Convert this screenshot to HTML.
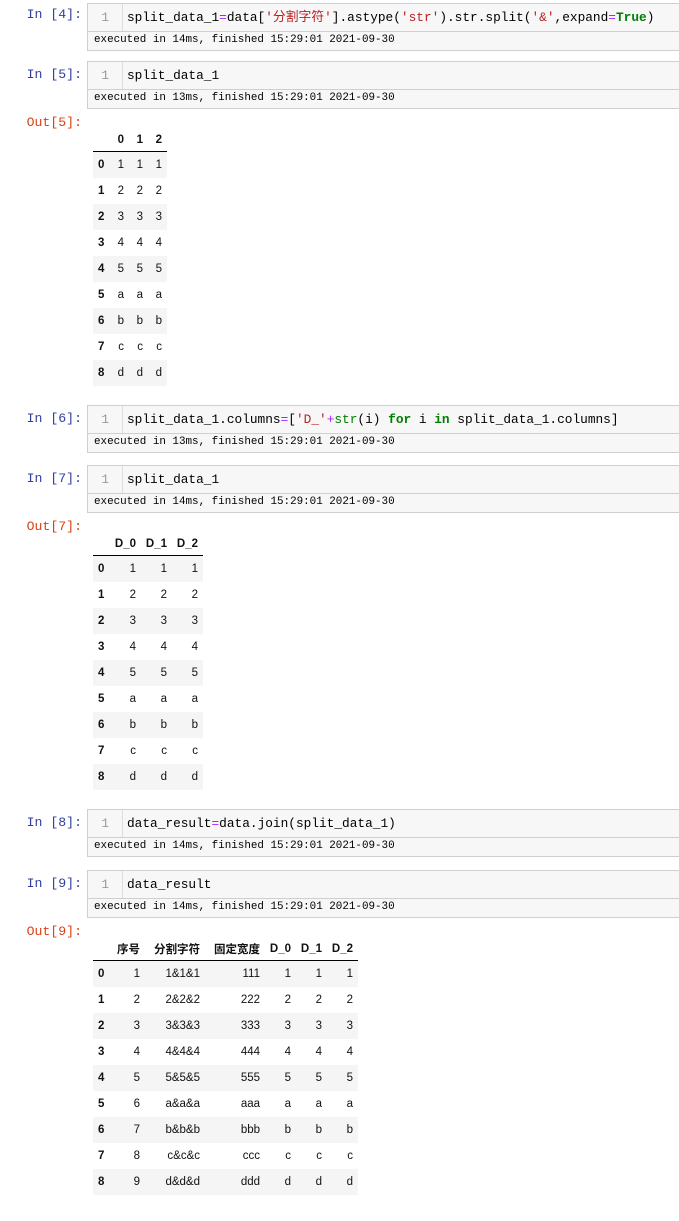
<!DOCTYPE html>
<html><head><meta charset="utf-8"><style>
body{margin:0;background:#fff;width:679px;height:1221px;position:relative;overflow:hidden;font-family:"Liberation Sans","Noto Sans CJK SC",sans-serif}
.lbl{position:absolute;left:0;width:82px;text-align:right;font-family:"Liberation Mono",monospace;font-size:13.2px;color:#303f9f}
.out{color:#d84315}
.box{position:absolute;left:87px;right:-2px;border:1px solid #cfcfcf;background:#f7f7f7}
.inp{height:27px;position:relative;font-family:"Liberation Mono","Noto Sans CJK SC",monospace;font-size:12.8px;line-height:27px;color:#000}
.ln{position:absolute;left:0;width:34px;height:27px;border-right:1px solid #ddd;text-align:right;color:#999}
.ln span{margin-right:13px}
.code{position:absolute;left:39px;white-space:pre}
.st{height:18px;border-top:1px solid #cfcfcf;font-family:"Liberation Mono",monospace;font-size:10.9px;line-height:17px;padding-left:6px;color:#000;background:#f7f7f7}
.s{color:#ba2121}.k{color:#008000;font-weight:bold}.o{color:#aa22ff}
table{position:absolute;left:93px;border-collapse:collapse;font-size:11.5px;color:#111}
th{font-weight:bold;height:23px;border-bottom:1px solid #000;text-align:right;padding:0 5px 0 0}
td{height:26px;text-align:right;padding:0 5px 0 0}
td:first-child,th:first-child{text-align:left;padding-left:5px;font-weight:bold}
tbody tr:nth-child(odd){background:#f5f5f5}
</style></head><body>

<div class="lbl" style="top:7px">In [4]:</div>
<div class="box" style="top:3px"><div class="inp"><div class="ln"><span>1</span></div><div class="code">split_data_1<span class="o">=</span>data[<span class="s">'分割字符'</span>].astype(<span class="s">'str'</span>).str.split(<span class="s">'&amp;'</span>,expand<span class="o">=</span><span class="k">True</span>)</div></div><div class="st">executed in 14ms, finished 15:29:01 2021-09-30</div></div>

<div class="lbl" style="top:67px">In [5]:</div>
<div class="box" style="top:61px"><div class="inp"><div class="ln"><span>1</span></div><div class="code">split_data_1</div></div><div class="st">executed in 13ms, finished 15:29:01 2021-09-30</div></div>
<div class="lbl out" style="top:115px">Out[5]:</div>
<table style="top:128px"><thead><tr><th style="width:7px"></th><th style="width:14px">0</th><th style="width:14px">1</th><th style="width:14px">2</th></tr></thead><tbody>
<tr><td>0</td><td>1</td><td>1</td><td>1</td></tr><tr><td>1</td><td>2</td><td>2</td><td>2</td></tr><tr><td>2</td><td>3</td><td>3</td><td>3</td></tr><tr><td>3</td><td>4</td><td>4</td><td>4</td></tr><tr><td>4</td><td>5</td><td>5</td><td>5</td></tr><tr><td>5</td><td>a</td><td>a</td><td>a</td></tr><tr><td>6</td><td>b</td><td>b</td><td>b</td></tr><tr><td>7</td><td>c</td><td>c</td><td>c</td></tr><tr><td>8</td><td>d</td><td>d</td><td>d</td></tr></tbody></table>

<div class="lbl" style="top:411px">In [6]:</div>
<div class="box" style="top:405px"><div class="inp"><div class="ln"><span>1</span></div><div class="code">split_data_1.columns<span class="o">=</span>[<span class="s">'D_'</span><span class="o">+</span><span style="color:#008000">str</span>(i) <span class="k">for</span> i <span class="k">in</span> split_data_1.columns]</div></div><div class="st">executed in 13ms, finished 15:29:01 2021-09-30</div></div>

<div class="lbl" style="top:471px">In [7]:</div>
<div class="box" style="top:465px"><div class="inp"><div class="ln"><span>1</span></div><div class="code">split_data_1</div></div><div class="st">executed in 14ms, finished 15:29:01 2021-09-30</div></div>
<div class="lbl out" style="top:519px">Out[7]:</div>
<table style="top:532px"><thead><tr><th style="width:7px"></th><th style="width:26px">D_0</th><th style="width:26px">D_1</th><th style="width:26px">D_2</th></tr></thead><tbody>
<tr><td>0</td><td>1</td><td>1</td><td>1</td></tr><tr><td>1</td><td>2</td><td>2</td><td>2</td></tr><tr><td>2</td><td>3</td><td>3</td><td>3</td></tr><tr><td>3</td><td>4</td><td>4</td><td>4</td></tr><tr><td>4</td><td>5</td><td>5</td><td>5</td></tr><tr><td>5</td><td>a</td><td>a</td><td>a</td></tr><tr><td>6</td><td>b</td><td>b</td><td>b</td></tr><tr><td>7</td><td>c</td><td>c</td><td>c</td></tr><tr><td>8</td><td>d</td><td>d</td><td>d</td></tr></tbody></table>

<div class="lbl" style="top:815px">In [8]:</div>
<div class="box" style="top:809px"><div class="inp"><div class="ln"><span>1</span></div><div class="code">data_result<span class="o">=</span>data.join(split_data_1)</div></div><div class="st">executed in 14ms, finished 15:29:01 2021-09-30</div></div>

<div class="lbl" style="top:876px">In [9]:</div>
<div class="box" style="top:870px"><div class="inp"><div class="ln"><span>1</span></div><div class="code">data_result</div></div><div class="st">executed in 14ms, finished 15:29:01 2021-09-30</div></div>
<div class="lbl out" style="top:924px">Out[9]:</div>
<table style="top:937px"><thead><tr><th style="width:10px"></th><th style="width:27px">序号</th><th style="width:55px">分割字符</th><th style="width:55px">固定宽度</th><th style="width:26px">D_0</th><th style="width:26px">D_1</th><th style="width:26px">D_2</th></tr></thead><tbody>
<tr><td>0</td><td>1</td><td>1&amp;1&amp;1</td><td>111</td><td>1</td><td>1</td><td>1</td></tr>
<tr><td>1</td><td>2</td><td>2&amp;2&amp;2</td><td>222</td><td>2</td><td>2</td><td>2</td></tr>
<tr><td>2</td><td>3</td><td>3&amp;3&amp;3</td><td>333</td><td>3</td><td>3</td><td>3</td></tr>
<tr><td>3</td><td>4</td><td>4&amp;4&amp;4</td><td>444</td><td>4</td><td>4</td><td>4</td></tr>
<tr><td>4</td><td>5</td><td>5&amp;5&amp;5</td><td>555</td><td>5</td><td>5</td><td>5</td></tr>
<tr><td>5</td><td>6</td><td>a&amp;a&amp;a</td><td>aaa</td><td>a</td><td>a</td><td>a</td></tr>
<tr><td>6</td><td>7</td><td>b&amp;b&amp;b</td><td>bbb</td><td>b</td><td>b</td><td>b</td></tr>
<tr><td>7</td><td>8</td><td>c&amp;c&amp;c</td><td>ccc</td><td>c</td><td>c</td><td>c</td></tr>
<tr><td>8</td><td>9</td><td>d&amp;d&amp;d</td><td>ddd</td><td>d</td><td>d</td><td>d</td></tr></tbody></table>
</body></html>
